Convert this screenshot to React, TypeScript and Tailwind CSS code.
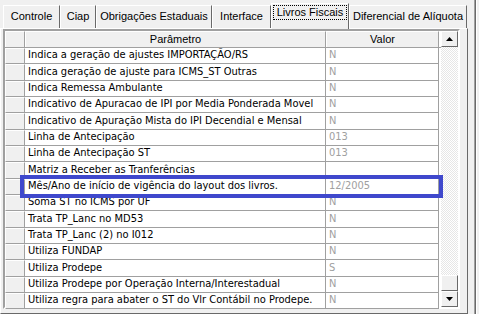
import React from "react";

const rows: [string, string][] = [
  ["Indica a geração de ajustes IMPORTAÇÃO/RS", "N"],
  ["Indica geração de ajuste para ICMS_ST Outras", "N"],
  ["Indica Remessa Ambulante", "N"],
  ["Indicativo de Apuracao de IPI por Media Ponderada Movel", "N"],
  ["Indicativo de Apuração Mista do IPI Decendial e Mensal", "N"],
  ["Linha de Antecipação", "013"],
  ["Linha de Antecipação ST", "013"],
  ["Matriz a Receber as Tranferências", ""],
  ["Mês/Ano de início de vigência do layout dos livros.", "12/2005"],
  ["Soma ST no ICMS por UF", "N"],
  ["Trata TP_Lanc no MD53", "N"],
  ["Trata TP_Lanc (2) no I012", "N"],
  ["Utiliza FUNDAP", "N"],
  ["Utiliza Prodepe", "S"],
  ["Utiliza Prodepe por Operação Interna/Interestadual", "N"],
  ["Utiliza regra para abater o ST do Vlr Contábil no Prodepe.", "N"],
];

const tabs = [
  { label: "Controle", w: "w-[57px]" },
  { label: "Ciap", w: "w-[36px]" },
  { label: "Obrigações Estaduais", w: "w-[116px]" },
  { label: "Interface", w: "w-[59px]" },
  { label: "Livros Fiscais", w: "w-[78px]", active: true },
  { label: "Diferencial de Alíquota", w: "w-[118px]" },
];

function Tab({ label, w, active }: { label: string; w: string; active?: boolean }) {
  if (active) {
    return (
      <div
        className={`${w} h-[26px] -mb-[1px] relative z-10 bg-[#f0f0f0] border-l border-t border-white border-r border-r-[#696969] flex justify-center pt-[1px]`}
      >
        <div className="border border-dotted border-black px-[2px] h-[15px] leading-[13px] w-full mx-[1px]">
          <span className="block text-center">{label}</span>
        </div>
      </div>
    );
  }
  return (
    <div
      className={`${w} h-[23px] bg-[#f0f0f0] border-l border-t border-white border-r border-r-[#696969] flex items-center justify-center pb-[1px]`}
    >
      {label}
    </div>
  );
}

function ArrowBtn({ up }: { up?: boolean }) {
  return (
    <div className="w-[17px] h-[16px] bg-[#f0f0f0] border-t border-l border-white border-r border-b border-r-[#696969] border-b-[#696969] flex items-center justify-center">
      <svg width="7" height="4" viewBox="0 0 7 4">
        {up ? (
          <polygon points="3.5,0 7,4 0,4" fill="#000" />
        ) : (
          <polygon points="0,0 7,0 3.5,4" fill="#000" />
        )}
      </svg>
    </div>
  );
}

export default function App() {
  return (
    <div
      className="w-[479px] h-[314px] bg-[#f0f0f0] overflow-hidden relative flex text-[11px] text-black"
      style={{ fontFamily: '"Liberation Sans", Arial, sans-serif' }}
    >
      {/* tab control */}
      <div className="w-[468px] flex flex-col">
        <div className="h-[28px] flex items-end pl-[3px]">
          {tabs.map((t) => (
            <Tab key={t.label} {...t} />
          ))}
        </div>
        <div className="flex-1 border-t border-l border-white border-r border-r-[#696969] border-b border-b-[#696969] pl-[2px] pr-[5px] pt-0 pb-[3px] flex">
          {/* grid */}
          <div className="w-[457px] h-[280px] border-t-2 border-l-2 border-t-[#a0a0a0] border-l-[#a0a0a0] border-r-2 border-b-2 border-r-white border-b-white bg-white flex">
            <div className="flex-1 flex flex-col">
              {/* header */}
              <div className="h-[17px] flex border-b border-[#a0a0a0]">
                <div className="w-[20px] bg-[#f0f0f0] border-r border-[#a0a0a0] border-t border-l border-t-white border-l-white" />
                <div className="w-[301px] bg-[#f0f0f0] border-r border-[#a0a0a0] border-t border-l border-t-white border-l-white flex items-center justify-center">
                  Parâmetro
                </div>
                <div className="w-[113px] bg-[#f0f0f0] border-r border-[#a0a0a0] border-t border-l border-t-white border-l-white flex items-center justify-center">
                  Valor
                </div>
              </div>
              {rows.map(([p, v], i) => (
                <div
                  key={i}
                  className={`${i % 3 === 1 ? "h-[17px]" : "h-[16px]"} flex text-[11px]`}
                  style={{ fontFamily: '"DejaVu Sans Condensed", "Liberation Sans", Arial, sans-serif' }}
                >
                  <div className="w-[20px] bg-[#f0f0f0] border-r border-b border-[#a0a0a0] border-t border-l border-t-white border-l-white" />
                  <div className="w-[301px] border-r border-b border-[#a0a0a0] pl-[3px] flex items-center whitespace-nowrap overflow-hidden">
                    {p}
                  </div>
                  <div className="w-[113px] border-r border-b border-[#a0a0a0] pl-[3px] flex items-center text-[#a0a0a0]">
                    {v}
                  </div>
                </div>
              ))}
            </div>
            {/* scrollbar */}
            <div className="w-[17px] flex flex-col">
              <ArrowBtn up />
              <div className="flex-1 bg-[repeating-conic-gradient(#ffffff_0_25%,#e6e6e6_0_50%)] bg-[length:2px_2px]" />
              <div className="w-[17px] h-[16px] bg-[#f0f0f0] border-t border-l border-white border-r border-b border-r-[#696969] border-b-[#696969]" />
              <ArrowBtn />
            </div>
          </div>
        </div>
      </div>
      {/* outer right border */}
      <div className="flex-1 flex">
        <div className="w-[6px]" />
        <div className="w-[2px] border-l border-[#a0a0a0] border-r border-r-[#696969]" />
        <div className="w-[1px] bg-white" />
      </div>
      {/* highlight annotation */}
      <div className="absolute left-[20px] top-[175px] w-[423px] h-[23px] border-[4px] border-[#3f48cc]" />
    </div>
  );
}
